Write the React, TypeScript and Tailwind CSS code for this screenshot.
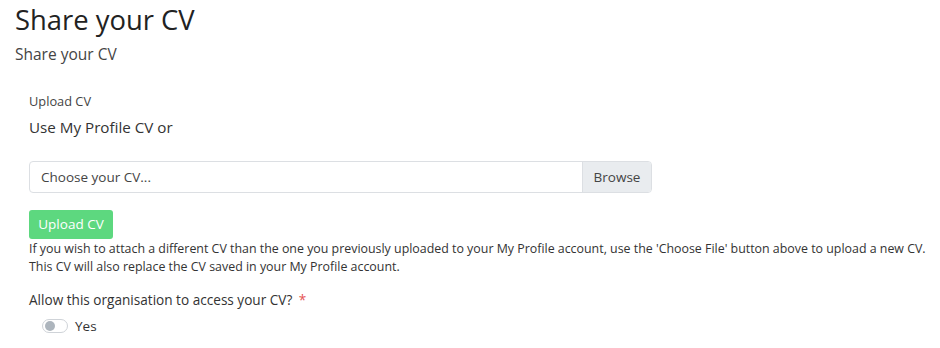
import React from "react";

export default function App() {
  return (
    <div className="w-[940px] h-[348px] bg-white overflow-hidden text-[#333] relative" style={{ fontFamily: '"Open Sans", "Liberation Sans", sans-serif' }}>
      <div className="pl-[15px]">
        <h1 className="text-[27.4px] leading-[28px] pt-[6px] text-[#222] font-normal">Share your CV</h1>
        <div className="text-[15.5px] leading-[20px] mt-[10px] text-[#444]">Share your CV</div>
      </div>
      <div className="pl-[29px] pr-[288px] pt-[29px]">
        <div className="text-[12.8px] leading-[16px] text-[#444]">Upload CV</div>
        <div className="text-[15.2px] leading-[20px] mt-[8px] text-[#333]">Use My Profile CV or</div>
        <div className="mt-[24px] flex h-[32px] border border-[#dcdfe3] rounded-[4px] overflow-hidden">
          <div className="flex-1 flex items-center pl-[11px] text-[13.5px] text-[#444]">Choose your CV...</div>
          <div className="w-[69px] flex items-center justify-center bg-[#e9ecef] border-l border-[#dcdfe3] text-[13.5px] text-[#444]">Browse</div>
        </div>
        <button className="mt-[17px] h-[29px] w-[84px] rounded-[3px] bg-[#5dd87f] text-white text-[13.5px] flex items-center justify-center">Upload CV</button>
      </div>
      <div className="pl-[29px] text-[12.4px] leading-[18px] text-[#333] mt-[1px]">
        <div>If you wish to attach a different CV than the one you previously uploaded to your My Profile account, use the 'Choose File' button above to upload a new CV.</div>
        <div>This CV will also replace the CV saved in your My Profile account.</div>
      </div>
      <div className="pl-[29px] mt-[15px] text-[13.6px] leading-[18px] text-[#333]">
        Allow this organisation to access your CV? <span className="text-[#e55353] ml-[3px]">*</span>
      </div>
      <div className="pl-[42px] mt-[7px] flex items-center gap-[7px]">
        <div className="w-[26px] h-[14px] rounded-full border border-[#cfd3d8] bg-white flex items-center px-[2px]">
          <div className="w-[10px] h-[10px] rounded-full bg-[#adb5bd]" />
        </div>
        <span className="text-[13.5px] text-[#333]">Yes</span>
      </div>
    </div>
  );
}
